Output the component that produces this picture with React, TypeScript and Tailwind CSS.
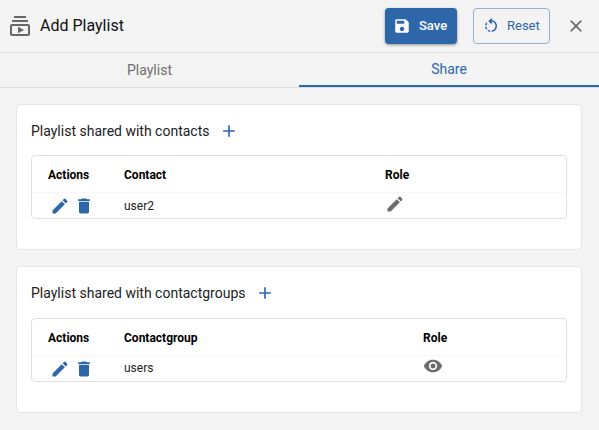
const EDIT = 'M3 17.25V21h3.75L17.81 9.94l-3.75-3.75L3 17.25zM20.71 7.04c.39-.39.39-1.02 0-1.41l-2.34-2.34a.9959.9959 0 0 0-1.41 0l-1.83 1.83 3.75 3.75 1.83-1.83z';
const DELETE = 'M6 19c0 1.1.9 2 2 2h8c1.1 0 2-.9 2-2V7H6v12zM19 4h-3.5l-1-1h-5l-1 1H5v2h14V4z';
const EYE = 'M12 4.5C7 4.5 2.73 7.61 1 12c1.73 4.39 6 7.5 11 7.5s9.27-3.11 11-7.5c-1.73-4.39-6-7.5-11-7.5zM12 17c-2.76 0-5-2.24-5-5s2.24-5 5-5 5 2.24 5 5-2.24 5-5 5zm0-8c-1.66 0-3 1.34-3 3s1.34 3 3 3 3-1.34 3-3-1.34-3-3-3z';
const SAVE = 'M17 3H5c-1.11 0-2 .9-2 2v14c0 1.1.89 2 2 2h14c1.1 0 2-.9 2-2V7l-4-4zm-5 16c-1.66 0-3-1.34-3-3s1.34-3 3-3 3 1.34 3 3-1.34 3-3 3zm3-10H5V5h10v4z';
const CLOSE = 'M19 6.41 17.59 5 12 10.59 6.41 5 5 6.41 10.59 12 5 17.59 6.41 19 12 13.41 17.59 19 19 17.59 13.41 12z';
const ADD = 'M19 13h-6v6h-2v-6H5v-2h6V5h2v6h6v2z';
const ROTATE = 'M7.11 8.53 5.7 7.11C4.8 8.27 4.24 9.61 4.07 11h2.02c.14-.87.49-1.72 1.02-2.47zM6.09 13H4.07c.17 1.39.72 2.73 1.62 3.89l1.41-1.42c-.52-.75-.87-1.59-1.01-2.47zm1.01 5.32c1.16.9 2.51 1.44 3.9 1.61V17.9c-.87-.15-1.71-.49-2.46-1.03L7.1 18.32zM13 4.07V1L8.45 5.55 13 10V6.09c2.84.48 5 2.94 5 5.91s-2.16 5.43-5 5.91v2.02c3.95-.49 7-3.85 7-7.93s-3.05-7.44-7-7.93z';
const SUBSCRIPTIONS = 'M4 6h16v2H4zm2-4h12v2H6zm14 8H4c-1.1 0-2 .9-2 2v8c0 1.1.9 2 2 2h16c1.1 0 2-.9 2-2v-8c0-1.1-.9-2-2-2zm0 10H4v-8h16v8zm-10-7.27v6.53L16 16z';

function Icon({ d, className }: { d: string; className: string }) {
  return (
    <svg viewBox="0 0 24 24" fill="currentColor" className={className}>
      <path d={d} />
    </svg>
  );
}

type ShareCardProps = {
  title: string;
  column: string;
  name: string;
  roleIcon: string;
  grid: string;
  tableGap: string;
  plusGap: string;
  nameShift: string;
  roleShift: string;
};

function ShareCard({ title, column, name, roleIcon, grid, tableGap, plusGap, nameShift, roleShift }: ShareCardProps) {
  return (
    <section className="bg-white rounded border border-[#e4e4e4] px-[14px] pt-[13px] pb-[30px]">
      <div className="flex items-center h-[26px] text-[14px] text-[#212121]">
        <span>{title}</span>
        <Icon d={ADD} className={`w-5 h-5 ${plusGap} text-[#2d67aa]`} />
      </div>
      <div className={`${tableGap} rounded border border-[#e0e0e0]`}>
        <div className={`${grid} h-[37px] pt-[1px] items-center text-[12px] font-bold text-black border-b border-[#f7f7f7]`}>
          <span className="pl-4">Actions</span>
          <span>{column}</span>
          <span>Role</span>
        </div>
        <div className={`${grid} h-[25px] items-center text-[12px] text-[#212121]`}>
          <div className="flex items-center pl-[18px] gap-1 text-[#2d67aa]">
            <Icon d={EDIT} className="w-5 h-5" />
            <Icon d={DELETE} className="w-5 h-5" />
          </div>
          <span className={nameShift}>{name}</span>
          <Icon d={roleIcon} className={`w-5 h-5 ${roleShift} text-[#6b6b6b]`} />
        </div>
      </div>
    </section>
  );
}

export default function App() {
  return (
    <div className="w-[599px] h-[430px] overflow-hidden bg-[#f3f3f3] font-['Roboto',sans-serif]">
      <header className="flex items-center h-[53px] border-b border-[#e2e2e2] pl-2 pr-[13px]">
        <Icon d={SUBSCRIPTIONS} className="w-6 h-6 text-[#666666]" />
        <h1 className="ml-2 text-[16px] text-[#111111]">Add Playlist</h1>
        <button className="ml-auto flex items-center w-[72px] h-9 pl-2 rounded bg-[#2d67aa] text-white text-[13px] font-medium shadow-[0_1px_3px_rgba(0,0,0,0.4)]">
          <Icon d={SAVE} className="w-[18px] h-[18px]" />
          <span className="ml-[8px]">Save</span>
        </button>
        <button className="ml-4 flex items-center w-[77px] h-9 pl-2 rounded border border-[#8fb0d4] text-[#2d67aa] text-[13px]">
          <Icon d={ROTATE} className="w-[18px] h-[18px]" />
          <span className="ml-[7px]">Reset</span>
        </button>
        <Icon d={CLOSE} className="ml-4 w-5 h-5 text-[#666666]" />
      </header>
      <nav className="grid grid-cols-[299px_1fr] h-[35px] border-b border-[#dddddd] text-[14px]">
        <div className="flex items-center justify-center text-[#6f6f6f]">Playlist</div>
        <div className="flex items-center justify-center text-[#2d67aa] border-b-2 border-[#2d67aa] h-[34px]">Share</div>
      </nav>
      <main className="flex flex-col gap-4 pl-4 pr-[17px] pt-4">
        <ShareCard title="Playlist shared with contacts" column="Contact" name="user2" roleIcon={EDIT} grid="grid grid-cols-[92px_261px_1fr]" tableGap="mt-[11px]" plusGap="ml-[10px]" nameShift="" roleShift="-mt-1" />
        <ShareCard title="Playlist shared with contactgroups" column="Contactgroup" name="users" roleIcon={EYE} grid="grid grid-cols-[92px_299px_1fr]" tableGap="mt-3" plusGap="ml-[9px]" nameShift="-mt-[2px]" roleShift="-mt-[6px]" />
      </main>
    </div>
  );
}
